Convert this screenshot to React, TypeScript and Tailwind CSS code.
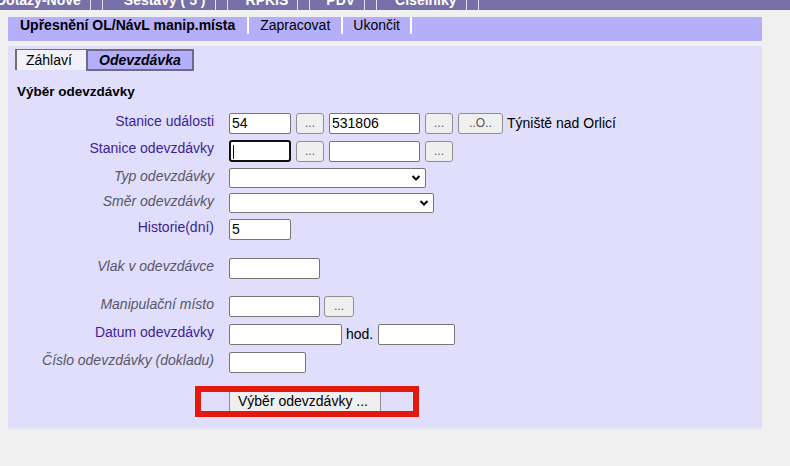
import React from 'react';

const topMenu = [
  { label: 'Dotazy-Nove', ml: -4 },
  { label: 'Sestavy ( 5 )', ml: 21 },
  { label: 'RPKIS', ml: 18 },
  { label: 'PDV', ml: 16 },
  { label: 'Číselníky', ml: 18 },
];

function TopSep() {
  return <span className="block w-px h-[22px] bg-[#e4e1f4]" />;
}

function Dots({ w = 'w-[28px]', text = '...' }: { w?: string; text?: string }) {
  return (
    <button
      type="button"
      className={`${w} h-[21px] shrink-0 rounded-[3px] border border-[#8f8f8f] bg-[#efefef] text-[12px] leading-[17px] text-[#555]`}
    >
      {text}
    </button>
  );
}

function Field({ w, value = '' }: { w: string; value?: string }) {
  return (
    <input
      readOnly
      value={value}
      className={`block ${w} h-[21px] shrink-0 rounded-[2px] border border-[#767676] bg-white px-[2px] text-[14px] text-black outline-none`}
    />
  );
}

function Select({ w }: { w: string }) {
  return (
    <div className={`relative ${w} h-[20px]`}>
      <select className="block w-full h-full appearance-none rounded-[2px] border border-[#767676] bg-white outline-none" />
      <svg
        className="absolute right-[5px] top-[6px] pointer-events-none"
        width="10"
        height="8"
        viewBox="0 0 10 8"
      >
        <path d="M1.5 2 L5 5.5 L8.5 2" fill="none" stroke="#111" strokeWidth="2.2" />
      </svg>
    </div>
  );
}

function Label({ text, req }: { text: string; req?: boolean }) {
  return (
    <div
      className={`w-[207px] shrink-0 pr-[1px] text-right leading-[17px] ${
        req ? 'text-[#3a1e9a]' : 'italic text-[#56566a]'
      }`}
    >
      {text}
    </div>
  );
}

function Row({ mt, label, req, children }: { mt: string; label: string; req?: boolean; children: React.ReactNode }) {
  return (
    <div className={`flex items-start ${mt}`}>
      <Label text={label} req={req} />
      <div className="ml-[14px] flex items-center">{children}</div>
    </div>
  );
}

export default function App() {
  return (
    <div className="min-h-screen bg-[#f0f0f0] text-[14px] text-black font-['Liberation_Sans',Arial,sans-serif]">
      {/* horní menu, oříznuté */}
      <div className="h-[10px] overflow-hidden bg-[#776fa8]">
        <div className="-mt-[11px] flex h-[22px] items-center text-white font-bold">
          {topMenu.map((m) => (
            <div key={m.label} className="flex items-center" style={{ marginLeft: m.ml }}>
              <span>{m.label}</span>
              <span className="ml-[9px]"><TopSep /></span>
              <span className="ml-[11px]"><TopSep /></span>
            </div>
          ))}
        </div>
      </div>

      <div className="ml-[8px] mt-[7px] w-[754px] h-[24px] bg-[#b5aefa] flex items-start">
        <div className="pl-[12px] pr-[12px] h-[17px] leading-[16px] font-bold">Upřesnění OL/NávL manip.místa</div>
        <span className="w-[2px] h-[17px] bg-white" />
        <div className="pl-[11px] pr-[11px] h-[17px] leading-[16px]">Zapracovat</div>
        <span className="w-[2px] h-[17px] bg-white" />
        <div className="pl-[10px] pr-[10px] h-[17px] leading-[16px]">Ukončit</div>
        <span className="w-[2px] h-[17px] bg-white" />
      </div>

      <div className="ml-[8px] mt-[5px] w-[754px] h-[384px] bg-[#e0defb] border-b-2 border-[#e9e8f7]">
        <div className="flex pt-[3px] pl-[7px]">
          <div className="w-[71px] h-[21px] border-l-2 border-t border-[#707070] bg-[#f2f1fb] pl-[9px] leading-[20px]">
            Záhlaví
          </div>
          <div className="w-[108px] h-[22px] border-2 border-[#6e6a8e] bg-[#b5aefa] pl-[11px] leading-[18px] font-bold italic">
            Odevzdávka
          </div>
        </div>

        <div className="mt-[12px] pl-[9px] font-bold text-[13.5px] leading-[18px]">Výběr odevzdávky</div>

        <Row mt="mt-[12px]" label="Stanice události" req>
          <Field w="w-[62px]" value="54" />
          <span className="ml-[5px] flex"><Dots /></span>
          <span className="ml-[5px] flex"><Field w="w-[91px]" value="531806" /></span>
          <span className="ml-[5px] flex"><Dots /></span>
          <span className="ml-[5px] flex"><Dots w="w-[45px]" text="..O.." /></span>
          <span className="ml-[4px] leading-[17px]">Týniště nad Orlicí</span>
        </Row>

        <Row mt="mt-[6px]" label="Stanice odevzdávky" req>
          <div className="relative w-[62px] h-[22px] rounded-[3px] border-2 border-[#101010] bg-white">
            <span className="absolute left-[2px] top-[3px] w-px h-[14px] bg-black" />
          </div>
          <span className="ml-[5px] flex"><Dots /></span>
          <span className="ml-[5px] flex"><Field w="w-[91px]" /></span>
          <span className="ml-[5px] flex"><Dots /></span>
        </Row>

        <Row mt="mt-[6px]" label="Typ odevzdávky">
          <Select w="w-[197px]" />
        </Row>

        <Row mt="mt-[5px]" label="Směr odevzdávky">
          <Select w="w-[205px]" />
        </Row>

        <Row mt="mt-[6px]" label="Historie(dní)" req>
          <Field w="w-[62px]" value="5" />
        </Row>

        <Row mt="mt-[18px]" label="Vlak v odevzdávce">
          <Field w="w-[91px]" />
        </Row>

        <Row mt="mt-[17px]" label="Manipulační místo">
          <Field w="w-[91px]" />
          <span className="ml-[4px] flex"><Dots w="w-[30px]" /></span>
        </Row>

        <Row mt="mt-[7px]" label="Datum odevzdávky" req>
          <Field w="w-[113px]" />
          <span className="ml-[4px] leading-[17px]">hod.</span>
          <span className="ml-[5px] flex"><Field w="w-[77px]" /></span>
        </Row>

        <Row mt="mt-[7px]" label="Číslo odevzdávky (dokladu)">
          <Field w="w-[77px]" />
        </Row>

        <div className="ml-[187px] mt-[13px] w-[224px] h-[31px] border-[6px] border-[#e3190d] flex">
          <div className="w-[28px] h-full" />
          <button
            type="button"
            className="w-[152px] h-full border-x border-[#8a8a8a] bg-[#efefef] pl-[8px] text-left leading-[17px]"
          >
            Výběr odevzdávky ...
          </button>
          <div className="flex-1 h-full" />
        </div>
      </div>
    </div>
  );
}
